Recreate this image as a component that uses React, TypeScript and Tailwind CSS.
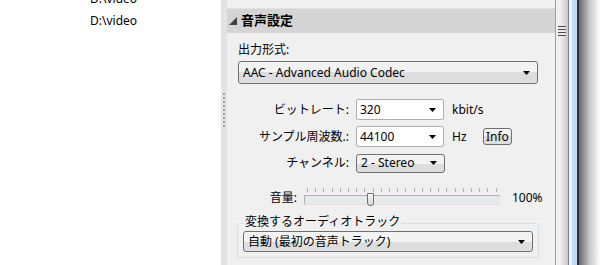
const font = "font-['Noto_Sans','Noto_Sans_CJK_JP',sans-serif]";

function Arrow() {
  return (
    <svg width="7" height="4" viewBox="0 0 7 4" className="shrink-0">
      <polygon points="0,0 7,0 3.5,4" fill="#000" />
    </svg>
  );
}

function Combo({ value, className }: { value: string; className: string }) {
  return (
    <div
      className={`flex items-center justify-between border border-[#707070] rounded-[3px] bg-gradient-to-b from-[#f3f3f3] from-50% to-[#dddddd] to-50% pl-[4px] pr-[7px] ${className}`}
    >
      <span className="leading-none">{value}</span>
      <Arrow />
    </div>
  );
}

function EditCombo({ value }: { value: string }) {
  return (
    <div className="flex items-center justify-between w-[88px] h-[21px] border border-[#abadb3] rounded-[2px] bg-white pl-[3px] pr-[7px]">
      <span className="leading-none">{value}</span>
      <Arrow />
    </div>
  );
}

function Slider() {
  const ticks = Array.from({ length: 24 }, (_, i) => i);
  return (
    <div className="flex flex-col w-[196px]">
      <div className="flex justify-between px-[3px] h-[8px]">
        {ticks.map((t) => (
          <div key={t} className="w-[1px] h-[4px] mt-[1px] bg-[#b0b0b0]" />
        ))}
      </div>
      <div className="relative h-[10px] border border-[#b0b0b0] border-r-[#e3e3e3] border-b-[#e3e3e3] bg-[#e7eaea]">
        <div className="absolute left-[62px] top-[-3px] w-[7px] h-[13px] border border-[#707070] rounded-b-[3px] bg-gradient-to-b from-[#f6f6f6] to-[#d8d8d8]" />
      </div>
    </div>
  );
}

export default function App() {
  const dots = Array.from({ length: 9 }, (_, i) => i);
  return (
    <div className={`flex w-[600px] h-[265px] overflow-hidden text-[12px] text-black ${font}`}>
      <div className="w-[221px] shrink-0 bg-white">
        <div className="flex flex-col pl-[90px] mt-[-12px]">
          <div className="h-[22px] leading-[22px]">D:\video</div>
          <div className="h-[22px] leading-[22px]">D:\video</div>
        </div>
      </div>

      <div className="w-[6px] shrink-0 bg-[#e3e3e3] flex flex-col gap-[2px] pt-[93px] pl-[2px]">
        {dots.map((d) => (
          <div key={d} className="w-[2px] h-[2px] bg-[#a0a0a0]" />
        ))}
      </div>

      <div className="w-[328px] shrink-0 bg-[#f0f0f0] pt-[8px]">
        <div className="h-[25px] flex items-center gap-[4px] pl-[2px] bg-[#d5d5d5] border-t border-[#e2e2e2]">
          <svg width="8" height="8" viewBox="0 0 8 8">
            <polygon points="8,0 8,8 0,8" fill="#404040" />
          </svg>
          <span className="text-[13px] font-bold">音声設定</span>
        </div>

        <div className="pl-[11px] pr-[17px] pt-[8px]">
          <div className="h-[18px] leading-[18px]">出力形式:</div>
          <Combo value="AAC - Advanced Audio Codec" className="w-[300px] h-[23px] mt-[2px]" />
        </div>

        <div className="flex flex-col gap-[6px] mt-[15px]">
          <div className="flex items-center h-[21px]">
            <div className="w-[123px] text-right pr-[1px]">ビットレート:</div>
            <div className="ml-[6px]">
              <EditCombo value="320" />
            </div>
            <div className="ml-[8px]">kbit/s</div>
          </div>
          <div className="flex items-center h-[21px]">
            <div className="w-[123px] text-right pr-[1px]">サンプル周波数.:</div>
            <div className="ml-[6px]">
              <EditCombo value="44100" />
            </div>
            <div className="ml-[8px] w-[31px]">Hz</div>
            <div className="h-[17px] px-[2px] flex items-center border border-[#707070] rounded-[3px] bg-gradient-to-b from-[#f3f3f3] from-50% to-[#dddddd] to-50% leading-none">
              Info
            </div>
          </div>
          <div className="flex items-center h-[20px]">
            <div className="w-[123px] text-right pr-[1px]">チャンネル:</div>
            <div className="ml-[6px]">
              <Combo value="2 - Stereo" className="w-[89px] h-[19px]" />
            </div>
          </div>
        </div>

        <div className="flex items-end mt-[13px] h-[19px]">
          <div className="w-[70px] text-right leading-[14px]">音量:</div>
          <div className="ml-[7px]">
            <Slider />
          </div>
          <div className="ml-[12px] leading-[14px]">100%</div>
        </div>

        <div className="relative ml-[10px] mr-[16px] mt-[18px] h-[35px] border border-[#d5dfe5] rounded-[3px] px-[5px] pt-[7px]">
          <div className="absolute left-[6px] top-[-10px] px-[1px] bg-[#f0f0f0] leading-[16px]">変換するオーディオトラック</div>
          <Combo value="自動 (最初の音声トラック)" className="w-[290px] h-[21px]" />
        </div>
      </div>

      <div className="w-[1px] shrink-0 bg-[#a0a0a0]" />
      <div className="w-[12px] shrink-0 bg-gradient-to-r from-[#f0f0f0] from-30% to-[#c8c8c8] pt-[26px] pl-[2px]">
        <div className="flex flex-col w-[8px]">
          <div className="h-[1px] bg-[#505050]" />
          <div className="h-[2px] bg-[#e8e8e8]" />
          <div className="h-[1px] bg-[#505050]" />
          <div className="h-[2px] bg-[#e8e8e8]" />
          <div className="h-[1px] bg-[#505050]" />
          <div className="h-[2px] bg-[#e8e8e8]" />
          <div className="h-[1px] bg-[#505050]" />
        </div>
      </div>
      <div className="w-[1px] shrink-0 bg-[#808080]" />
      <div className="w-[3px] shrink-0 bg-[#eef4fb]" />
      <div className="w-[5px] shrink-0 bg-[#bfdcf8]" />
      <div className="w-[2px] shrink-0 bg-[#2c3038]" />
      <div className="flex-1 bg-gradient-to-r from-[#6a6a6a] via-[#c8c8c8] to-white" />
    </div>
  );
}
